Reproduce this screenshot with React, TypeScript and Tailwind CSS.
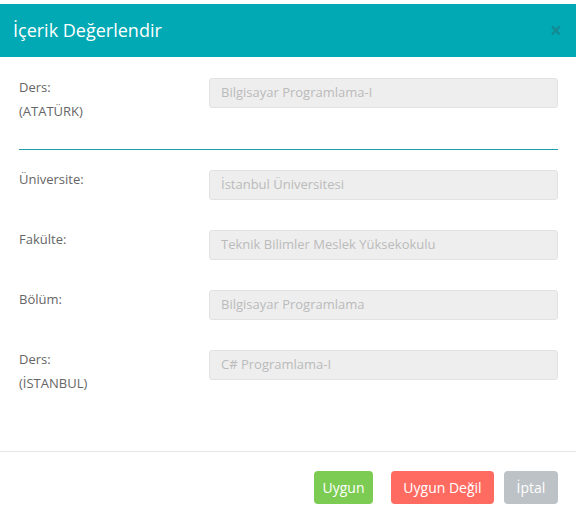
import React from 'react';

const font = { fontFamily: '"Open Sans", "Noto Sans", sans-serif' };

const Field = ({ label, value }: { label: React.ReactNode; value: string }) => (
  <div className="flex items-start">
    <div className="w-[190px] -mt-[3px] text-[13px] leading-[24px] text-[#666]">{label}</div>
    <div className="flex-1 h-[30px] flex items-center px-[11px] bg-[#eeeeee] border border-[#e2e2e2] rounded-[3px] text-[13px] text-[#bbbbbb]">
      {value}
    </div>
  </div>
);

export default function App() {
  return (
    <div className="w-[581px] h-[526px] bg-white" style={font}>
      <div className="w-[576px] pt-[4px]">
        {/* Başlık */}
        <div className="h-[53px] bg-[#00a9b4] flex items-center justify-between pl-[13px] pr-[14px]">
          <h4 className="text-[18px] text-white">İçerik Değerlendir</h4>
          <span className="text-[21px] font-bold leading-none text-[#158a93]">×</span>
        </div>

        {/* İçerik */}
        <div className="pl-[19px] pr-[18px] pt-[21px]">
          <div className="h-[71px]">
            <Field
              label={
                <>
                  <p>Ders:</p>
                  <p>(ATATÜRK)</p>
                </>
              }
              value="Bilgisayar Programlama-I"
            />
          </div>
          <div className="h-px bg-[#1f9ea8]" />
          <div className="pt-[20px]">
            <div className="h-[60px]">
              <Field label="Üniversite:" value="İstanbul Üniversitesi" />
            </div>
            <div className="h-[60px]">
              <Field label="Fakülte:" value="Teknik Bilimler Meslek Yüksekokulu" />
            </div>
            <div className="h-[60px]">
              <Field label="Bölüm:" value="Bilgisayar Programlama" />
            </div>
            <div className="h-[101px]">
              <Field
                label={
                  <>
                    <p>Ders:</p>
                    <p>(İSTANBUL)</p>
                  </>
                }
                value="C# Programlama-I"
              />
            </div>
          </div>
        </div>

        {/* Alt butonlar */}
        <div className="border-t border-[#e5e5e5] pt-[19px] pr-[18px] flex justify-end">
          <button className="h-[33px] w-[59px] rounded-[4px] bg-[#7ccb52] text-white text-[14px]">Uygun</button>
          <button className="ml-[18px] h-[33px] w-[103px] rounded-[4px] bg-[#ff6b61] text-white text-[14px]">Uygun Değil</button>
          <button className="ml-[10px] h-[33px] w-[54px] rounded-[4px] bg-[#bdc2c6] text-white text-[14px]">İptal</button>
        </div>
      </div>
    </div>
  );
}
